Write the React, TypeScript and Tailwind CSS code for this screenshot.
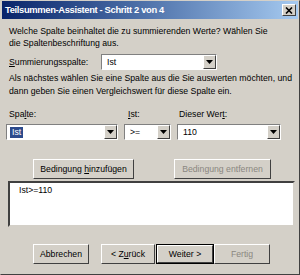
const sunken = "border border-t-[#808080] border-l-[#808080] border-b-white border-r-white";

function Arrow() {
  return (
    <div className="w-[13px] h-full flex items-center justify-center bg-[#D4D0C8] border border-t-white border-l-white border-b-[#404040] border-r-[#404040]">
      <svg width="7" height="4" viewBox="0 0 7 4">
        <polygon points="0,0 7,0 3.5,4" fill="#000" />
      </svg>
    </div>
  );
}

function Select({ value, width, selected = false }: { value: string; width: string; selected?: boolean }) {
  return (
    <div className={`${width} h-[16px] ${sunken} bg-white flex items-stretch`}>
      <div className="flex-1 flex items-center pl-[3px] pr-[1px] overflow-hidden">
        <span className={selected ? "bg-[#2c4a8c] text-white px-[2px] leading-[11px]" : "px-[2px]"}>{value}</span>
      </div>
      <Arrow />
    </div>
  );
}

function Button({ children, width, disabled = false, isDefault = false }: { children: React.ReactNode; width: string; disabled?: boolean; isDefault?: boolean }) {
  return (
    <div className={`${width} h-[20px] ${isDefault ? "border border-black" : ""}`}>
      <div className="h-full flex items-center justify-center bg-[#D4D0C8] border border-t-white border-l-white border-b-[#404040] border-r-[#404040]">
        <span className={disabled ? "text-[#8a8780]" : "text-black"}>{children}</span>
      </div>
    </div>
  );
}

export default function App() {
  return (
    <div
      className="w-[300px] h-[275px] bg-[#D4D0C8] text-[8.7px] leading-[12px] text-black whitespace-nowrap flex flex-col overflow-hidden border border-t-[#D4D0C8] border-l-[#D4D0C8] border-b-[#404040] border-r-[#404040]"
      style={{ fontFamily: '"Liberation Sans", Arial, sans-serif' }}
    >
      {/* title bar */}
      <div className="h-[18px] shrink-0 mx-[1px] flex items-center justify-between pl-[3px] pr-[2px] bg-gradient-to-r from-[#0A246A] to-[#A6CAF0]">
        <span className="text-white font-bold text-[9.4px] tracking-[-0.35px]">Teilsummen-Assistent - Schritt 2 von 4</span>
        <div className="w-[14px] h-[12px] bg-[#D4D0C8] border border-t-white border-l-white border-b-[#404040] border-r-[#404040] flex items-center justify-center">
          <svg width="8" height="7" viewBox="0 0 8 7">
            <path d="M1 0.5 L7 6.5 M7 0.5 L1 6.5" stroke="#000" strokeWidth="1.6" />
          </svg>
        </div>
      </div>

      <div className="flex-1 flex flex-col pl-[8px] pr-[6px]">
        <p className="mt-[6px]">
          Welche Spalte beinhaltet die zu summierenden Werte? Wählen Sie
          <br />
          die Spaltenbeschriftung aus.
        </p>

        <div className="mt-[5px] flex items-center">
          <span className="w-[92px]">
            <u>S</u>ummierungsspalte:
          </span>
          <Select value="Ist" width="w-[116px]" />
        </div>

        <p className="mt-[2px] leading-[13px]">
          Als nächstes wählen Sie eine Spalte aus die Sie auswerten möchten, und
          <br />
          dann geben Sie einen Vergleichswert für diese Spalte ein.
        </p>

        <div className="mt-[10px] -ml-[3px] flex gap-[6px]">
          <div className="flex flex-col gap-[4px]">
            <span className="pl-[3px]">
              Spa<u>l</u>te:
            </span>
            <Select value="Ist" width="w-[112px]" selected />
          </div>
          <div className="flex flex-col gap-[4px]">
            <span className="pl-[4px]">
              <u>I</u>st:
            </span>
            <Select value=">=" width="w-[47px]" />
          </div>
          <div className="flex flex-col gap-[4px]">
            <span className="pl-[2px]">
              Dieser Wer<u>t</u>:
            </span>
            <Select value="110" width="w-[104px]" />
          </div>
        </div>

        <div className="mt-[19px] flex">
          <div className="ml-[24px]">
            <Button width="w-[101px]">
              Bedingung <u>h</u>inzufügen
            </Button>
          </div>
          <div className="ml-[40px]">
            <Button width="w-[97px]" disabled>
              Bedingung entfernen
            </Button>
          </div>
        </div>

        <div className="mt-[2px] -ml-[1px] -mr-[2px] h-[46px] shrink-0 bg-white border-2 border-t-[#404040] border-l-[#404040] border-b-[#D4D0C8] border-r-[#D4D0C8] pl-[9px] pt-[1px]">
          Ist&gt;=110
        </div>

        <div className="mt-[17px] flex">
          <div className="ml-[24px]">
            <Button width="w-[56px]">Abbrechen</Button>
          </div>
          <div className="ml-[12px]">
            <Button width="w-[54px]">
              &lt; Z<u>u</u>rück
            </Button>
          </div>
          <div className="ml-[1px]">
            <Button width="w-[58px]" isDefault>
              Weiter &gt;
            </Button>
          </div>
          <div>
            <Button width="w-[56px]" disabled>
              Fertig
            </Button>
          </div>
        </div>
      </div>
    </div>
  );
}
